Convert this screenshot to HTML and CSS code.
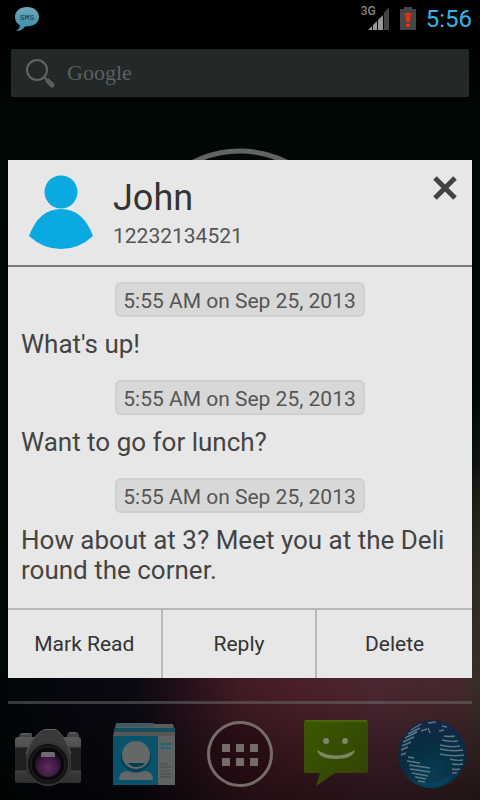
FILE: index.html
```html
<!DOCTYPE html>
<html lang="en">
<head>
<meta charset="utf-8">
<meta name="viewport" content="width=device-width, initial-scale=1">
<title>Messages</title>
<link rel="stylesheet" href="styles.css">
</head>
<body>
<div class="home">
  <header class="status">
    <svg class="status-sms" width="26" height="26" viewBox="0 0 26 26" aria-hidden="true">
      <defs><linearGradient id="sms" x1="0" y1="0" x2="0" y2="1"><stop offset="0" stop-color="#71a8bb"/><stop offset="1" stop-color="#328caa"/></linearGradient></defs>
      <path d="M13 1C6 1 1 5 1 11c0 4 2 7 5 8.500c0 2-2 4-4 5.500c4 0 7-1.500 9-4.500C19 21 25 17 25 11C25 5 20 1 13 1z" fill="url(#sms)"/>
      <text class="sms-label" x="13" y="14" text-anchor="middle">SMS</text>
    </svg>
    <div class="status-right">
      <span class="network">3G</span>
      <svg class="signal" width="22" height="24" viewBox="0 0 22 24" aria-hidden="true">
        <path d="M0 23L4 19v4zM5 18l4-4v9H5zM10 13l5-5v15h-5z" fill="#999"/><path d="M16 6l5-6v23h-5z" fill="#444"/>
      </svg>
      <svg class="battery" width="16" height="24" viewBox="0 0 16 24" aria-hidden="true">
        <path d="M4 0h8v2h4v21H0V2h4z" fill="#454545"/><path d="M5 6h6l-1 9H6zM6 17h4v3H6z" fill="#e0300c"/>
      </svg>
      <time>5:56</time>
    </div>
  </header>
  <button class="search" type="button" aria-label="Google search">
    <svg width="32" height="32" viewBox="0 0 32 32" aria-hidden="true">
      <circle cx="12" cy="13" r="10" fill="none" stroke="#626565" stroke-width="2"/>
      <path d="M19 20l4 4" stroke="#626565" stroke-width="2"/><path d="M23 24l4 4" stroke="#5a5d5d" stroke-width="5" stroke-linecap="round"/>
    </svg>
    <span>Google</span>
  </button>
  <div class="clock">
    <svg width="220" height="220" viewBox="0 0 220 220" aria-hidden="true"><circle cx="110" cy="110" r="104" fill="none" stroke="#606464" stroke-width="5"/></svg>
  </div>
  <nav class="dock" aria-label="Favorites">
    <a href="#camera" aria-label="Camera">
      <svg width="72" height="72" viewBox="0 0 72 72">
        <defs>
          <linearGradient id="metal" x1="0" y1="0" x2="0" y2="1"><stop offset="0" stop-color="#606060"/><stop offset="1" stop-color="#303030"/></linearGradient>
          <radialGradient id="lens" cx=".5" cy=".65" r=".6"><stop offset="0" stop-color="#622863"/><stop offset=".65" stop-color="#3c1840"/><stop offset="1" stop-color="#150c18"/></radialGradient>
        </defs>
        <path d="M7 19q0-4 4-4h9v4zM55 18q0-4 4-4h5q3 0 3 4v1H55z" fill="#444"/>
        <path d="M9 16h8M57 15h7" stroke="#6a6a6a"/>
        <path d="M3 22q0-3 3-3h20l4-6q1-2 3-2h10q2 0 3 2l4 6h16q3 0 3 3v41q0 2-2 2H5q-2 0-2-2z" fill="url(#metal)"/>
        <path d="M3 29h66v24H3z" fill="#202020"/>
        <path d="M3 29h66M3 53h66" stroke="#444"/>
        <path d="M14 36Q17 22 30 12h15Q56 22 59 36v16H14z" fill="#393939"/>
        <path d="M14 36Q18 22 29 13M59 36Q55 22 46 13" fill="none" stroke="#5a5a5a"/>
        <circle cx="36" cy="46" r="22" fill="#131313"/><circle cx="36" cy="46" r="21" fill="none" stroke="#353535" stroke-width="2"/>
        <circle cx="36" cy="46" r="17" fill="#090909" stroke="#242424"/><circle cx="36" cy="46" r="13" fill="url(#lens)"/>
        <path d="M29 36l1-2h12l1 2v3H29z" fill="#706a71"/>
      </svg>
    </a>
    <a href="#people" aria-label="People">
      <svg width="72" height="72" viewBox="0 0 72 72">
        <path d="M8 6h57l2 8H6z" fill="#575d5f"/><path d="M8 5h38v4H8z" fill="#3f5c66"/><path d="M7 10h60v4H6z" fill="#154e61"/>
        <path d="M6 14h61v4H5z" fill="#565656"/><path d="M5 18h45v49H5z" fill="#07536c"/><path d="M50 18h17v49H50z" fill="#606363"/>
        <circle cx="28" cy="39" r="15" fill="#053f52"/><path d="M11 62q0-9 9-9q8 4 16 0q9 0 9 9z" fill="#646868"/>
        <circle cx="28" cy="37" r="14" fill="#646868"/><path d="M20 45h17q-3 4-8.500 4T20 45z" fill="#034052"/>
        <path d="M52 26h5M58 26h6M52 30h5M58 30h5" stroke="#276078" stroke-width="2"/>
        <path d="M52 46h8M52 49h11M52 53h5M58 53h4M52 56h12M52 59h11" stroke="#484c4c"/>
      </svg>
    </a>
    <a href="#apps" aria-label="Apps">
      <svg width="72" height="72" viewBox="0 0 72 72">
        <circle cx="36" cy="36" r="31.500" fill="#180509" fill-opacity=".4" stroke="#756b6b" stroke-width="3"/>
        <path d="M18 26h8v8h-8zM32 26h8v8h-8zM46 26h8v8h-8zM18 40h8v8h-8zM32 40h8v8h-8zM46 40h8v8h-8z" fill="#746c6b"/>
      </svg>
    </a>
    <a href="#messaging" aria-label="Messaging">
      <svg width="72" height="72" viewBox="0 0 72 72">
        <defs><linearGradient id="green" x1="0" y1="0" x2="1" y2="1"><stop offset="0" stop-color="#3c5700"/><stop offset="1" stop-color="#304306"/></linearGradient></defs>
        <path d="M6 2h60q2 0 2 2v49q0 2-2 2H35L16 68l4-13H6q-2 0-2-2V4q0-2 2-2z" fill="url(#green)"/><path d="M5 3h62" stroke="#4a6608" stroke-width="2"/>
        <circle cx="26" cy="23" r="3" fill="#7b8767"/><circle cx="45" cy="23" r="3" fill="#7b8767"/>
        <path d="M17 32q19 11 38 0q-2 9-19 9t-19-9z" fill="#7b8767"/>
      </svg>
    </a>
    <a href="#browser" aria-label="Browser">
      <svg width="72" height="72" viewBox="0 0 72 72">
        <defs>
          <radialGradient id="globe" cx=".5" cy=".8" r=".8"><stop offset="0" stop-color="#083c52"/><stop offset=".55" stop-color="#062c3f"/><stop offset="1" stop-color="#182546"/></radialGradient>
          <pattern id="dots" width="4" height="4" patternUnits="userSpaceOnUse"><circle cx="2" cy="2" r=".5" fill="#10465b"/></pattern>
        </defs>
        <circle cx="36" cy="36" r="34" fill="url(#globe)"/><circle cx="36" cy="36" r="33" fill="url(#dots)"/>
        <path d="M15 12l10-6M12 16l12-6M9 20l12-6M7 24l11-5M6 28l9-4M5 32l7-3M5 37l5-2M25 13l6-2M32 10l2 5M32 5l8-1M43 13l5-1M46 8l5 1M12 39l6 1M11 43l13 2M13 47l21 3M14 51l20 3M16 55l16 3M19 59l11 2M22 63l7 1M48 18q6 1 11 0M46 22q8 2 16 1M44 27q10 3 20 1M44 31q12 3 23 1M44 36q12 3 24 1M54 41q7 2 13 1M56 46q6 1 11 0M56 51q4 1 8 0M56 55l5 0" stroke="#5b7782" stroke-width="1.400" fill="none"/>
        <path d="M9 57q20 16 49-1Q49 70 36 70Q19 70 9 57z" fill="#086080" opacity=".3"/>
      </svg>
    </a>
  </nav>
</div>
<div class="overlay">
  <section class="popup" role="dialog" aria-labelledby="sender">
    <header class="contact">
      <svg width="64" height="76" viewBox="0 0 64 76" aria-hidden="true"><circle cx="32" cy="17" r="16.500" fill="#0aa9e1"/><path d="M0 61Q10 34 32 34T64 61Q50 74 32 74T0 61z" fill="#0aa9e1"/></svg>
      <div class="who"><h1 id="sender">John</h1><p>12232134521</p></div>
      <button class="close" type="button" aria-label="Close"><svg width="26" height="26" viewBox="0 0 26 26"><path d="M3 3l20 20M23 3L3 23" stroke="#424242" stroke-width="5"/></svg></button>
    </header>
    <div class="messages">
      <article><time>5:55 AM on Sep 25, 2013</time><p>What's up!</p></article>
      <article><time>5:55 AM on Sep 25, 2013</time><p>Want to go for lunch?</p></article>
      <article><time>5:55 AM on Sep 25, 2013</time><p>How about at 3? Meet you at the Deli round the corner.</p></article>
    </div>
    <footer class="actions">
      <button type="button">Mark Read</button>
      <button type="button">Reply</button>
      <button type="button">Delete</button>
    </footer>
  </section>
</div>
</body>
</html>
```
FILE: styles.css
```css
* { box-sizing: border-box; }
body { margin: 0; background: #000; font-family: Roboto, sans-serif; }
h1, p { margin: 0; font-weight: 400; }
button { margin: 0; padding: 0; border: 0; background: none; font: inherit; color: inherit; }
svg { display: block; flex: none; }

.home {
  min-height: 100vh;
  display: flex;
  flex-direction: column;
  background:
    linear-gradient(transparent 86%, rgba(0, 0, 0, .5) 100%),
    radial-gradient(ellipse 20px 220px at 100% 76%, #303022, transparent),
    linear-gradient(#000 0, #000 5%, #000707 14%, #000707 58%, transparent 82%),
    linear-gradient(90deg, #000606 0, #06070f 14%, #0b0912 28%, #24101a 38%, #401b24 50%, #4a1f28 62%, #4a2630 78%, #42282c 100%);
}
.status { height: 38px; padding: 0 8px 0 14px; display: flex; align-items: center; justify-content: space-between; }
.sms-label { font-family: "Liberation Mono", monospace; font-size: 8px; fill: #103846; }
.status-right { display: flex; align-items: center; }
.network { align-self: flex-start; padding-top: 3px; font-size: 12px; line-height: 12px; font-weight: 500; color: #888; }
.signal { margin-left: -8px; }
.battery { margin-left: 10px; }
.status time { margin-left: 10px; font-size: 24px; line-height: 34px; color: #33b5e5; }

.search { margin: 11px 11px 0; height: 48px; padding: 0 14px; display: flex; align-items: center; gap: 10px; border-radius: 2px; background: #222928; box-shadow: 0 2px 4px #000; }
.search span { font-family: "Liberation Serif", serif; font-size: 22px; line-height: 28px; color: #5c6060; }
.clock { flex: 1; padding-top: 48px; display: flex; justify-content: center; align-items: flex-start; }
.dock { margin: 0 8px; padding: 14px 0 10px; border-top: 3px solid rgba(110, 110, 110, .5); display: flex; justify-content: space-around; gap: 16px; }
.dock a { flex: 0 1 80px; display: flex; justify-content: center; }

.overlay { position: fixed; inset: 38px 0 0; padding: 0 8px; display: flex; align-items: center; }
.popup { width: 100%; background: #e7e7e7; color: #333; }
.contact { padding: 15px 14px 14px 21px; display: flex; align-items: flex-start; border-bottom: 2px solid #777; }
.who { flex: 1; padding-left: 20px; }
.who h1 { font-size: 36px; line-height: 46px; }
.who p { font-size: 21px; line-height: 30px; color: #555; }
.messages { padding: 15px 13px 23px; display: flex; flex-direction: column; gap: 21px; }
article { display: flex; flex-direction: column; gap: 12px; }
article time { align-self: center; height: 35px; padding: 0 7px 0 6px; border: 2px solid #cfcfcf; border-radius: 6px; background: #d8d8d8; color: #555; font-size: 21px; line-height: 34px; }
article p { font-size: 26px; line-height: 30px; color: #444; }
.actions { display: grid; grid-template-columns: repeat(3, 1fr); border-top: 2px solid #b8b8b8; }
.actions button { height: 68px; font-size: 21px; line-height: 30px; }
.actions button:not(:last-child) { border-right: 2px solid #b8b8b8; }
```
